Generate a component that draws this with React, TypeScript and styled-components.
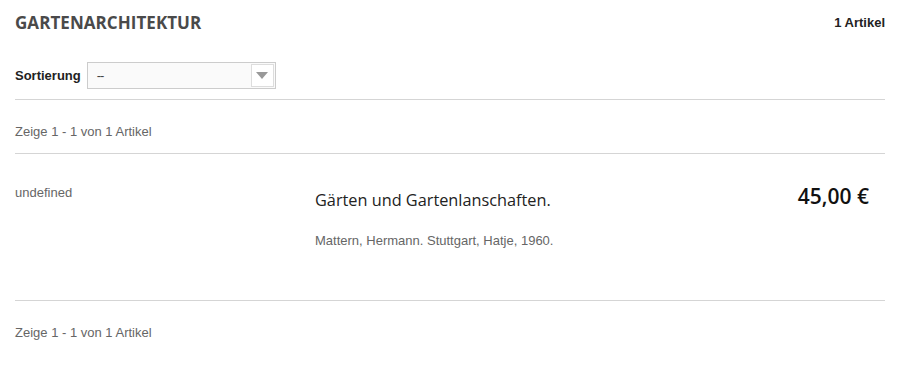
import React from 'react'
import styled, { createGlobalStyle } from 'styled-components'

const GlobalStyle = createGlobalStyle`
  body {
    margin: 0;
    background: #fff;
    font-family: "Liberation Sans", Arial, sans-serif;
  }
`

type CountProps = {
  from: number
  to: number
  total: number
}

function Count({ from, to, total }: CountProps) {
  return (
    <CountRow>
      Zeige {from} - {to} von {total} Artikel
    </CountRow>
  )
}

export default function App() {
  return (
    <>
      <GlobalStyle />
      <Page>
        <Header>
          <Title>Gartenarchitektur</Title>
          <Total>1 Artikel</Total>
        </Header>

        <SortRow>
          <SortLabel>Sortierung</SortLabel>
          <Select>
            <SelectValue>--</SelectValue>
            <SelectArrow>
              <svg width="12" height="7" viewBox="0 0 12 7">
                <path d="M0 0 L12 0 L6 7 Z" fill="#999" />
              </svg>
            </SelectArrow>
          </Select>
        </SortRow>

        <Divider />
        <Count from={1} to={1} total={1} />
        <Divider />

        <Item>
          <ItemImage>undefined</ItemImage>
          <ItemInfo>
            <ItemTitle>Gärten und Gartenlanschaften.</ItemTitle>
            <ItemMeta>Mattern, Hermann. Stuttgart, Hatje, 1960.</ItemMeta>
          </ItemInfo>
          <Price>45,00 €</Price>
        </Item>

        <Divider />
        <Count from={1} to={1} total={1} />
      </Page>
    </>
  )
}

const Page = styled.div`
  width: 870px;
  padding-left: 15px;
  padding-top: 10px;
`

const Header = styled.div`
  display: flex;
  align-items: center;
  justify-content: space-between;
  height: 24px;
`

const Title = styled.h1`
  margin: 0;
  font-family: "Open Sans", sans-serif;
  font-size: 17px;
  font-weight: 700;
  text-transform: uppercase;
  letter-spacing: 0.05px;
  color: #4a4a4a;
`

const Total = styled.span`
  font-size: 13px;
  font-weight: 700;
  color: #222;
`

const SortRow = styled.div`
  display: flex;
  align-items: center;
  gap: 6px;
  margin-top: 28px;
  margin-bottom: 10px;
`

const SortLabel = styled.span`
  font-size: 13px;
  font-weight: 700;
  color: #222;
`

const Select = styled.div`
  box-sizing: border-box;
  width: 189px;
  height: 27px;
  border: 1px solid #ccc;
  background: #fafafa;
  display: flex;
  align-items: center;
  justify-content: space-between;
  padding: 0 1px 0 9px;
`

const SelectValue = styled.span`
  font-size: 13px;
  letter-spacing: -1px;
  color: #444;
`

const SelectArrow = styled.span`
  box-sizing: border-box;
  width: 23px;
  height: 23px;
  border: 1px solid #ddd;
  background: #fff;
  display: flex;
  align-items: center;
  justify-content: center;
`

const Divider = styled.hr`
  margin: 0;
  border: 0;
  border-top: 1px solid #d5d5d5;
`

const CountRow = styled.div`
  padding: 24px 0 14px;
  line-height: 15px;
  font-size: 13px;
  color: #666;
`

const Item = styled.div`
  display: grid;
  grid-template-columns: 300px 1fr auto;
  align-items: start;
  padding: 31px 16px 52px 0;
`

const ItemImage = styled.div`
  font-size: 13px;
  line-height: 15px;
  color: #666;
`

const ItemInfo = styled.div`
  display: flex;
  flex-direction: column;
  padding-top: 4px;
`

const ItemTitle = styled.div`
  font-family: "Open Sans", sans-serif;
  font-size: 16.3px;
  line-height: 22px;
  color: #222;
`

const ItemMeta = styled.div`
  margin-top: 22px;
  font-size: 13px;
  line-height: 15px;
  color: #666;
`

const Price = styled.div`
  margin-top: -3px;
  font-family: "Open Sans", sans-serif;
  font-size: 21px;
  font-weight: 600;
  color: #111;
`
